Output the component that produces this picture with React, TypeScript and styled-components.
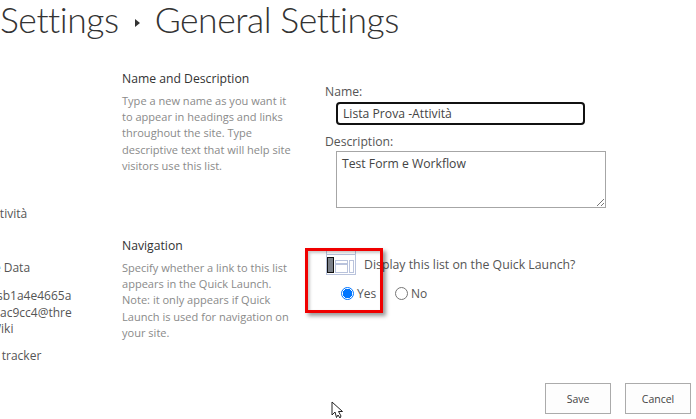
import React from 'react'
import styled, { createGlobalStyle } from 'styled-components'

const GlobalStyle = createGlobalStyle`
  html, body {
    margin: 0;
    padding: 0;
    background: #fff;
    overflow: hidden;
  }
  body {
    font-family: 'Open Sans', 'Noto Sans', 'Liberation Sans', sans-serif;
  }
`

const Page = styled.div`
  position: relative;
  width: 696px;
  height: 419px;
  overflow: hidden;
  background: #fff;
  color: #444;
`

const Title = styled.h1`
  display: flex;
  align-items: flex-start;
  height: 46px;
  margin: 0;
  font-family: 'Lato', 'Open Sans', sans-serif;
  font-size: 35.5px;
  font-weight: 300;
  line-height: 40px;
  letter-spacing: -0.45px;
  color: #333;
  white-space: nowrap;
`

const Arrow = styled.span`
  width: 0;
  height: 0;
  margin: 19px 15px 0 16px;
  border-top: 4.5px solid transparent;
  border-bottom: 4.5px solid transparent;
  border-left: 5px solid #333;
`

const Body = styled.div`
  display: grid;
  grid-template-columns: 122px 1fr;
`

const Nav = styled.nav`
  display: flex;
  flex-direction: column;
  padding-top: 159px;
  font-size: 12px;
  color: #555;
  white-space: nowrap;
`

const NavItem = styled.div<{ $left: number; $top: number }>`
  margin-left: ${(p) => p.$left}px;
  margin-top: ${(p) => p.$top}px;
  line-height: 17px;
`

const Sections = styled.div`
  display: flex;
  flex-direction: column;
`

const Section = styled.section<{ $height: number }>`
  display: grid;
  grid-template-columns: 203px 1fr;
  height: ${(p) => p.$height}px;
`

const Info = styled.div`
  padding-top: 24px;
`

const Heading = styled.h3`
  margin: 0 0 6px;
  font-size: 12.2px;
  font-weight: 400;
  line-height: 17px;
  color: #333;
`

const Help = styled.p`
  width: 172px;
  margin: 0;
  font-size: 11.05px;
  line-height: 16.2px;
  color: #8a8a8a;
`

const Fields = styled.div`
  display: flex;
  flex-direction: column;
  padding-top: 37px;
`

const Label = styled.label`
  font-size: 12.2px;
  line-height: 17px;
  color: #555;
`

const NameInput = styled.div`
  box-sizing: border-box;
  width: 249px;
  height: 23px;
  margin: 2px 0 8px 11px;
  padding-left: 5px;
  border: 2px solid #111;
  border-radius: 4px;
  font-size: 12.2px;
  line-height: 19px;
  color: #444;
`

const DescriptionBox = styled.div`
  position: relative;
  box-sizing: border-box;
  width: 270px;
  height: 57px;
  margin: 1px 0 0 11px;
  padding: 3px 5px;
  border: 1px solid #a6a6a6;
  font-size: 12.2px;
  line-height: 17px;
  color: #444;
`

const Grip = styled.svg`
  position: absolute;
  right: 0;
  bottom: 0;
`

const NavFields = styled.div`
  display: flex;
  flex-direction: column;
  padding-top: 37px;
`

const QuestionRow = styled.div`
  display: flex;
  align-items: center;
  height: 25px;
  margin-left: 1px;
`

const Question = styled.span`
  margin: 3px 0 0 8px;
  font-size: 12.3px;
  color: #555;
`

const RadioRow = styled.div`
  display: flex;
  align-items: center;
  margin: 10px 0 0 16px;
`

const RadioOption = styled.div`
  display: flex;
  align-items: center;
  gap: 3px;
  width: 54px;
  font-size: 12px;
  line-height: 17px;
  color: #555;
`

const RadioCircle = styled.span<{ $checked?: boolean }>`
  box-sizing: border-box;
  width: 13px;
  height: 13px;
  border-radius: 50%;
  border: 1px solid ${(p) => (p.$checked ? '#0075ff' : '#767676')};
  background: ${(p) => (p.$checked ? 'radial-gradient(circle, #0075ff 0 4.5px, #fff 5px)' : '#fff')};
`

const Actions = styled.div`
  display: flex;
  justify-content: flex-end;
  gap: 14px;
  margin-top: 41px;
  padding-right: 5px;
`

const Button = styled.div`
  box-sizing: border-box;
  display: flex;
  align-items: center;
  justify-content: center;
  width: 66px;
  height: 31px;
  border: 1px solid #ababab;
  background: #fdfdfd;
  font-size: 10.5px;
  color: #444;
`

const Callout = styled.div`
  position: absolute;
  left: 305px;
  top: 248px;
  box-sizing: border-box;
  width: 78px;
  height: 65px;
  border: 3px solid #f00000;
  box-shadow: 3px 3px 4px rgba(0, 0, 0, 0.4), inset 2px 2px 3px rgba(0, 0, 0, 0.22);
  pointer-events: none;
`

const Cursor = styled.svg`
  position: absolute;
  left: 331px;
  top: 401px;
`

const QuickLaunchIcon = () => (
  <svg width="30" height="25" viewBox="0 0 30 25" fill="none">
    <g stroke="#b9c3dc" strokeWidth="1">
      <rect x="0.5" y="0.5" width="29" height="24" />
      <path d="M0.5 4.5H29.5" />
      <rect x="9.5" y="10.5" width="12" height="3" />
      <rect x="9.5" y="14.5" width="12" height="8" />
      <rect x="23.5" y="10.5" width="4" height="12" />
    </g>
    <rect x="1.5" y="7.5" width="6" height="15" fill="#7b8088" stroke="#111" strokeWidth="1" />
  </svg>
)

const App: React.FC = () => (
  <Page>
    <GlobalStyle />
    <Title>
      Settings
      <Arrow />
      General Settings
    </Title>
    <Body>
      <Nav>
        <NavItem $left={-12} $top={0}>Attività</NavItem>
        <NavItem $left={-20} $top={37}>Site Data</NavItem>
        <NavItem $left={-3} $top={11}>sb1a4e4665a</NavItem>
        <NavItem $left={0} $top={0}>ac9cc4@thre</NavItem>
        <NavItem $left={-10} $top={-1}>Wiki</NavItem>
        <NavItem $left={-22} $top={10}>Site tracker</NavItem>
      </Nav>
      <Sections>
        <Section $height={167}>
          <Info>
            <Heading>Name and Description</Heading>
            <Help>
              Type a new name as you want it to appear in headings and links throughout the site. Type descriptive text
              that will help site visitors use this list.
            </Help>
          </Info>
          <Fields>
            <Label>Name:</Label>
            <NameInput>Lista Prova -Attività</NameInput>
            <Label>Description:</Label>
            <DescriptionBox>
              Test Form e Workflow
              <Grip width="9" height="9" viewBox="0 0 9 9">
                <path d="M1 8L8 1M5 8L8 5" stroke="#777" strokeWidth="1" />
              </Grip>
            </DescriptionBox>
          </Fields>
        </Section>
        <Section $height={129}>
          <Info>
            <Heading>Navigation</Heading>
            <Help>
              Specify whether a link to this list appears in the Quick Launch. Note: it only appears if Quick Launch is
              used for navigation on your site.
            </Help>
          </Info>
          <NavFields>
            <QuestionRow>
              <QuickLaunchIcon />
              <Question>Display this list on the Quick Launch?</Question>
            </QuestionRow>
            <RadioRow>
              <RadioOption>
                <RadioCircle $checked />
                Yes
              </RadioOption>
              <RadioOption>
                <RadioCircle />
                No
              </RadioOption>
            </RadioRow>
          </NavFields>
        </Section>
        <Actions>
          <Button>Save</Button>
          <Button>Cancel</Button>
        </Actions>
      </Sections>
    </Body>
    <Callout />
    <Cursor width="14" height="18" viewBox="0 0 14 18">
      <path d="M1 1V14L4 11L5.5 16.5L7 14L9 17L10 15L7.5 10.5H11.5Z" fill="#fff" stroke="#222" strokeWidth="1" />
    </Cursor>
  </Page>
)

export default App
